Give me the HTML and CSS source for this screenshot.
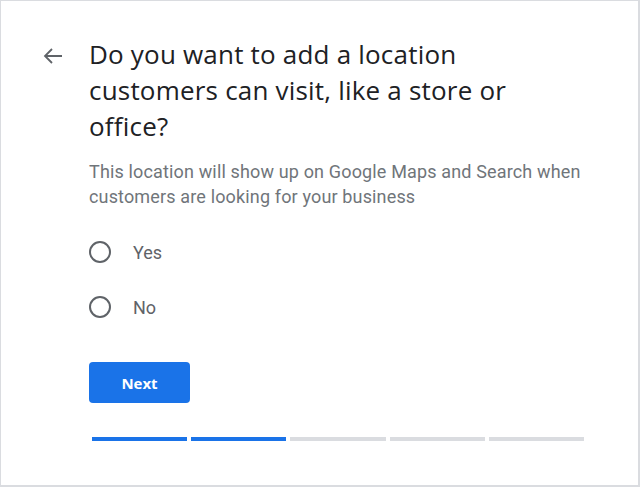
FILE: index.html
```html
<!DOCTYPE html>
<html>
<head>
<meta charset="utf-8">
<link rel="stylesheet" href="styles.css">
</head>
<body>
<div class="frame">
  <div class="layout">
    <div class="back">
      <svg width="20" height="16" viewBox="0 0 20 16"><path d="M19 8H2M9 1L2 8l7 7" fill="none" stroke="#5f6368" stroke-width="1.8"/></svg>
    </div>
    <div class="main">
      <h1 class="title">Do you want to add a location customers can visit, like a store or office?</h1>
      <p class="sub">This location will show up on Google Maps and Search when customers are looking for your business</p>
      <div class="options">
        <label class="opt"><span class="radio"></span><span class="lbl">Yes</span></label>
        <label class="opt"><span class="radio"></span><span class="lbl">No</span></label>
      </div>
      <button class="next">Next</button>
      <div class="progress">
        <span class="seg on"></span><span class="seg on"></span><span class="seg"></span><span class="seg"></span><span class="seg"></span>
      </div>
    </div>
  </div>
</div>
</body>
</html>
```
FILE: styles.css
```css
html, body { margin: 0; padding: 0; background: #fff; }
.frame {
  box-sizing: border-box;
  width: 640px;
  height: 487px;
  border: 1px solid #dadce0;
  border-right-width: 2px;
  border-bottom-width: 2px;
}
.layout { display: flex; padding-top: 35px; }
.back { padding-left: 42px; padding-top: 12px; box-sizing: border-box; flex: none; width: 88px; }
.back svg { display: block; }
.main { flex: none; width: 510px; }
.title {
  margin: 0;
  font-family: "Open Sans", sans-serif;
  font-weight: 400;
  font-size: 26px;
  letter-spacing: 0.2px;
  line-height: 36px;
  color: #202124;
  width: 460px;
}
.sub {
  margin: 15px 0 0;
  font-family: Roboto, sans-serif;
  font-size: 18px;
  letter-spacing: 0.15px;
  line-height: 25px;
  color: #70757a;
  width: 510px;
}
.options { display: flex; flex-direction: column; gap: 33px; margin-top: 32px; }
.opt { display: flex; align-items: center; height: 22px; }
.radio {
  box-sizing: border-box;
  width: 22px; height: 22px;
  border: 2px solid #5f6368;
  border-radius: 50%;
  flex: none;
}
.lbl {
  margin-left: 22px;
  font-family: Roboto, sans-serif;
  font-size: 18px;
  color: #5f6368;
}
.next {
  display: block;
  margin-top: 44px;
  width: 101px; height: 41px;
  border: none;
  border-radius: 4px;
  background: #1a73e8;
  color: #fff;
  font-family: "Open Sans", sans-serif;
  font-weight: 700;
  font-size: 15px;
  padding: 0;
}
.progress { display: flex; gap: 4px; margin-top: 34px; margin-left: 3px; width: 492px; }
.seg { flex: 1; height: 4px; background: #dadce0; }
.seg.on { background: #1a73e8; }
```
